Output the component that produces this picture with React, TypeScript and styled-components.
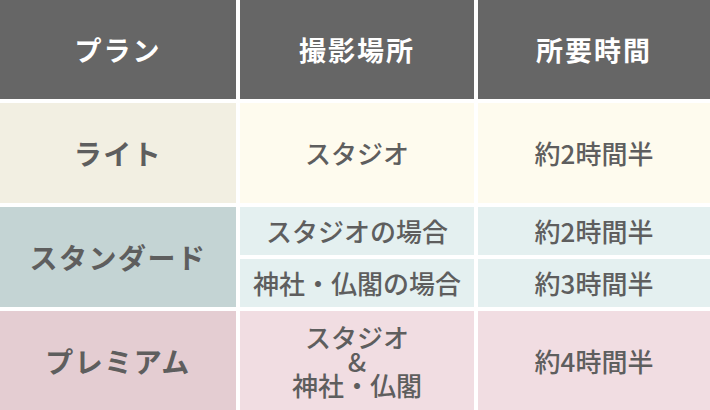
import styled, { createGlobalStyle } from "styled-components";

const GlobalStyle = createGlobalStyle`
	html, body {
		margin: 0;
		padding: 0;
		background: #ffffff;
	}
	body {
		font-family: "Noto Sans CJK JP", "Noto Sans", sans-serif;
	}
`;

type Tone = "light" | "standard" | "premium";

const planColors: Record<Tone, string> = {
	light: "#f2efe2",
	standard: "#c4d4d4",
	premium: "#e4cdd2",
};

const cellColors: Record<Tone, string> = {
	light: "#fefbee",
	standard: "#e4f0f0",
	premium: "#f1dde2",
};

const PlanTable = styled.div`
	display: grid;
	grid-template-columns: 236px 234px 232px;
	grid-template-rows: 99px 100px 100px 99px;
	gap: 4px;
	width: 710px;
	height: 410px;
	background: #ffffff;
`;

const HeadCell = styled.div`
	display: flex;
	align-items: center;
	justify-content: center;
	background: #666666;
	color: #ffffff;
	font-size: 27px;
	font-weight: 700;
	letter-spacing: 2px;
`;

const PlanCell = styled.div<{ $tone: Tone }>`
	display: flex;
	align-items: center;
	justify-content: center;
	background: ${({ $tone }) => planColors[$tone]};
	color: #5e5e5e;
	font-size: 28px;
	font-weight: 700;
	letter-spacing: 1.5px;
`;

const BodyCell = styled.div<{ $tone: Tone }>`
	display: flex;
	align-items: center;
	justify-content: center;
	text-align: center;
	background: ${({ $tone }) => cellColors[$tone]};
	color: #5e5e5e;
	font-size: 26px;
	font-weight: 500;
	line-height: 24px;
`;

const SplitCell = styled.div`
	display: grid;
	grid-template-rows: 1fr 1fr;
	gap: 4px;
`;

export default function App() {
	return (
		<>
			<GlobalStyle />
			<PlanTable>
				<HeadCell>プラン</HeadCell>
				<HeadCell>撮影場所</HeadCell>
				<HeadCell>所要時間</HeadCell>

				<PlanCell $tone="light">ライト</PlanCell>
				<BodyCell $tone="light">スタジオ</BodyCell>
				<BodyCell $tone="light">約2時間半</BodyCell>

				<PlanCell $tone="standard">スタンダード</PlanCell>
				<SplitCell>
					<BodyCell $tone="standard">スタジオの場合</BodyCell>
					<BodyCell $tone="standard">神社・仏閣の場合</BodyCell>
				</SplitCell>
				<SplitCell>
					<BodyCell $tone="standard">約2時間半</BodyCell>
					<BodyCell $tone="standard">約3時間半</BodyCell>
				</SplitCell>

				<PlanCell $tone="premium">プレミアム</PlanCell>
				<BodyCell $tone="premium">
					スタジオ
					<br />
					&amp;
					<br />
					神社・仏閣
				</BodyCell>
				<BodyCell $tone="premium">約4時間半</BodyCell>
			</PlanTable>
		</>
	);
}
